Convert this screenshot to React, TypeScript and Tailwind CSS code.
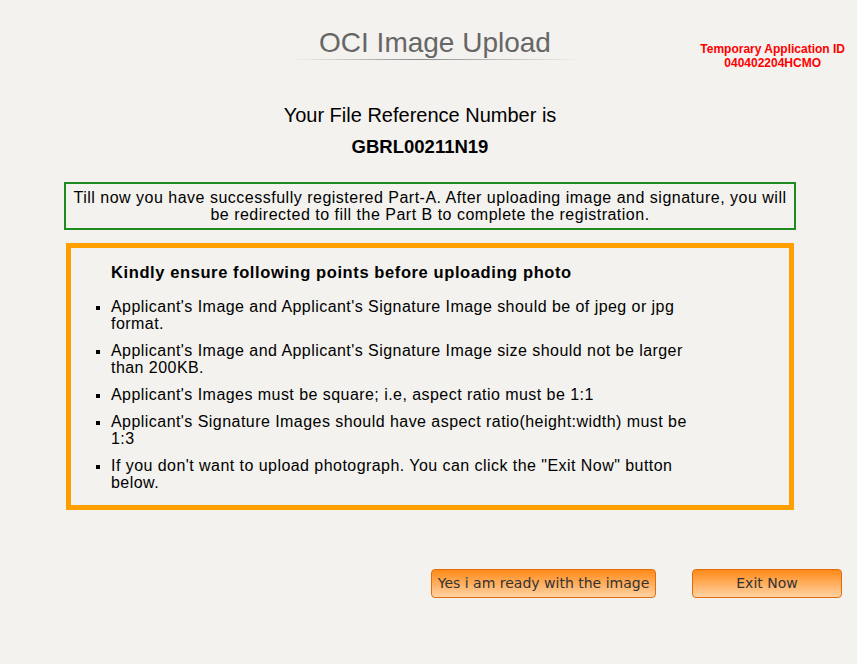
import React from "react";

const points: string[][] = [
  ["Applicant's Image and Applicant's Signature Image should be of jpeg or jpg", "format."],
  ["Applicant's Image and Applicant's Signature Image size should not be larger", "than 200KB."],
  ["Applicant's Images must be square; i.e, aspect ratio must be 1:1"],
  ["Applicant's Signature Images should have aspect ratio(height:width) must be", "1:3"],
  ["If you don't want to upload photograph. You can click the \"Exit Now\" button", "below."],
];

export default function App() {
  return (
    <div className="min-h-screen bg-[#f3f2ee] font-['Liberation_Sans',Arial,Helvetica,sans-serif] text-black pb-[40px]">
      <header className="flex pt-[29px]">
        <div className="ml-[290px] w-[290px]">
          <h1 className="text-center text-[28px] leading-[28px] text-[#666666]">OCI Image Upload</h1>
          <div className="mt-[2px] h-px bg-[linear-gradient(to_right,rgba(0,0,0,0),#8c8c8c_45%,rgba(0,0,0,0))]" />
        </div>
        <div className="ml-auto mr-[12px] mt-[13px] text-center text-[12px] font-bold leading-[14px] text-[#ff0000]">
          <div>Temporary Application ID</div>
          <div>040402204HCMO</div>
        </div>
      </header>

      <div className="mt-[34px] pr-[17px] text-center text-[20px] leading-[22px]">Your File Reference Number is</div>
      <div className="mt-[10px] pr-[17px] text-center text-[18.5px] font-bold leading-[22px]">GBRL00211N19</div>

      <div className="ml-[64px] mt-[24px] w-[732px] border-2 border-[#1f8a1f] px-[6px] py-[5px] text-center text-[16px] leading-[17px] tracking-[0.5px]">
        Till now you have successfully registered Part-A. After uploading image and signature, you will be redirected to fill the Part B to complete the registration.
      </div>

      <div className="ml-[66px] mt-[13px] w-[728px] border-[5px] border-[#ffa000] pb-[14px] pt-[16px]">
        <h2 className="pl-[40px] text-[16.5px] font-bold leading-[17px] tracking-[0.6px]">Kindly ensure following points before uploading photo</h2>
        <ul className="mt-[17px] flex flex-col gap-[10px] pl-[25px]">
          {points.map((lines) => (
            <li key={lines[0]} className="flex items-start text-[16px] leading-[17px] tracking-[0.45px]">
              <span className="mt-[8px] h-[4px] w-[4px] shrink-0 bg-black" />
              <span className="ml-[11px] w-[650px] whitespace-nowrap">
                {lines.map((l, i) => (
                  <React.Fragment key={i}>
                    {i > 0 && <br />}
                    {l}
                  </React.Fragment>
                ))}
              </span>
            </li>
          ))}
        </ul>
      </div>

      <div className="ml-[431px] mt-[59px] flex gap-[36px] font-['DejaVu_Sans',Verdana,sans-serif] text-[14px] text-[#333333]">
        <button className="h-[29px] w-[225px] rounded-[4px] border border-[#e06c0a] bg-[linear-gradient(to_bottom,#ff8a17,#ffd2a4)] text-center leading-[27px]">
          Yes i am ready with the image
        </button>
        <button className="h-[29px] w-[150px] rounded-[4px] border border-[#e06c0a] bg-[linear-gradient(to_bottom,#ff8a17,#ffd2a4)] text-center leading-[27px]">
          Exit Now
        </button>
      </div>
    </div>
  );
}
